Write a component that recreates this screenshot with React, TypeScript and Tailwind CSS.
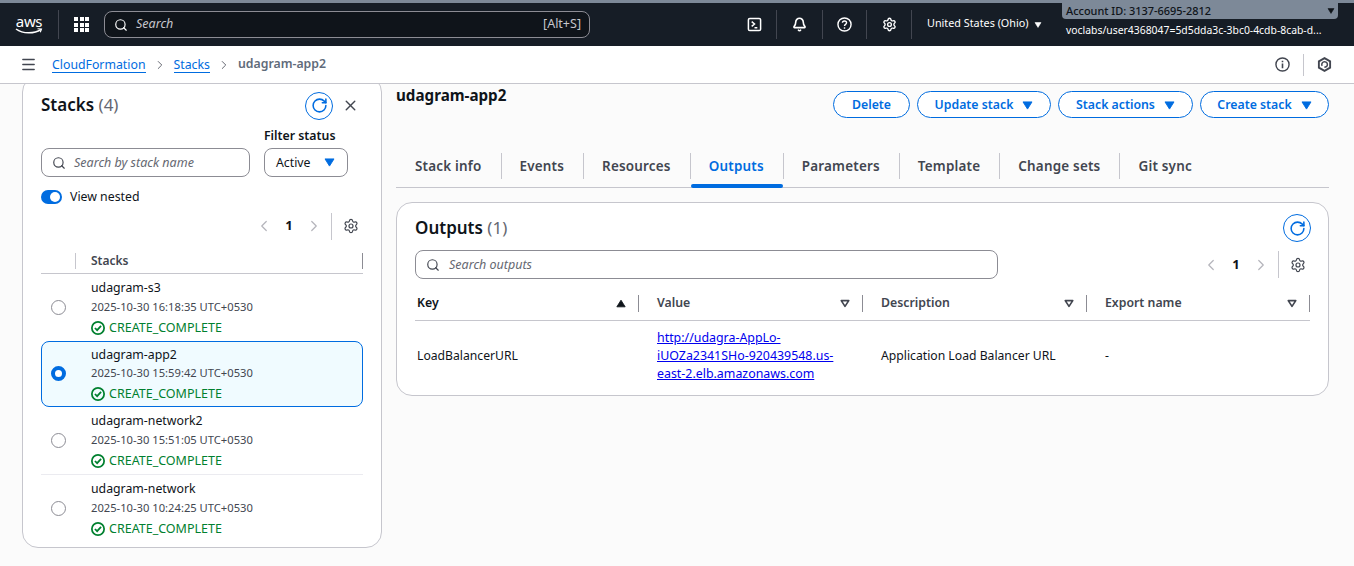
import React from 'react';
import { ChevronLeft, ChevronRight, Search, Settings, X, RotateCw, Bell, Menu } from 'lucide-react';

const Caret = ({ className = '' }: { className?: string }) => (
  <svg viewBox="0 0 12 10" className={className} fill="currentColor">
    <path d="M1 1h10L6 9z" stroke="currentColor" strokeWidth="1" strokeLinejoin="round" />
  </svg>
);

const SortDown = () => (
  <svg viewBox="0 0 12 10" className="w-[10px] h-[9px] text-[#424650]" fill="none">
    <path d="M1.5 1.5h9L6 8.5z" stroke="currentColor" strokeWidth="2" strokeLinejoin="round" />
  </svg>
);

const SortUp = () => (
  <svg viewBox="0 0 12 10" className="w-[10px] h-[9px] text-[#0f141a]" fill="currentColor">
    <path d="M1 9h10L6 1z" stroke="currentColor" strokeWidth="1" strokeLinejoin="round" />
  </svg>
);

const CheckCircle = () => (
  <svg viewBox="0 0 16 16" className="w-[14px] h-[14px] text-[#00802f] shrink-0" fill="none" stroke="currentColor" strokeWidth="2">
    <circle cx="8" cy="8" r="7" />
    <path d="M4.5 8l2.5 2.5L11.5 5.5" />
  </svg>
);

const AwsLogo = () => (
  <div className="flex flex-col items-center w-[28px]">
    <span className="text-[15px] leading-[13px] text-white font-normal tracking-tight">aws</span>
    <svg viewBox="0 0 28 7" className="w-[28px] h-[7px]" fill="none" stroke="white" strokeWidth="1.5">
      <path d="M1 1c7 5 18 5 25 .5" />
      <path d="M22.500 .8l4 .2-1.200 3.200" strokeWidth="1.100" />
    </svg>
  </div>
);

const GridIcon = () => (
  <div className="grid grid-cols-3 gap-[1.5px] w-[15px] h-[15px] shrink-0">
    {Array.from({ length: 9 }).map((_, i) => (
      <span key={i} className="bg-white w-[4px] h-[4px]" />
    ))}
  </div>
);

const CloudShell = () => (
  <svg viewBox="0 0 16 16" className="w-[15px] h-[15px]" fill="none" stroke="white" strokeWidth="1.6">
    <rect x="1.5" y="1.5" width="13" height="13" rx="1.5" />
    <path d="M5 5l3 2.5L5 10M8 11.5h3" />
  </svg>
);

const HelpIcon = () => (
  <svg viewBox="0 0 16 16" className="w-[15px] h-[15px]" fill="none" stroke="white" strokeWidth="1.5">
    <circle cx="8" cy="8" r="7" />
    <path d="M5.8 6.2C5.8 4.9 6.8 4.2 8 4.2s2.2.8 2.2 2c0 1.6-2.2 1.7-2.2 3.4" />
    <path d="M8 11v1.5" />
  </svg>
);

const InfoIcon = () => (
  <svg viewBox="0 0 16 16" className="w-[15px] h-[15px]" fill="none" stroke="#424650" strokeWidth="1.5">
    <circle cx="8" cy="8" r="7" />
    <path d="M8 7v5M8 4v1.6" strokeWidth="1.7" />
  </svg>
);

const HexIcon = () => (
  <svg viewBox="0 0 16 16" className="w-[15px] h-[15px]" fill="none" stroke="#424650" strokeWidth="2">
    <path d="M8 1.2l6 3.4v6.8l-6 3.4-6-3.4V4.600z" />
    <path d="M5.500 9.500A3 3 0 1 1 8 11l3-1" strokeWidth="1.600" />
  </svg>
);

const RefreshButton = () => (
  <button className="w-[28px] h-[28px] rounded-full border border-[#006ce0] bg-white flex items-center justify-center text-[#006ce0]">
    <RotateCw className="w-[17px] h-[17px]" strokeWidth={2.2} />
  </button>
);

const Pager = () => (
  <div className="flex items-center h-[28px]">
    <ChevronLeft className="w-[18px] h-[18px] text-[#b4b4bb]" strokeWidth={1.6} />
    <span className="mx-[12px] text-[13px] font-bold text-[#0f141a] w-[8px] text-center">1</span>
    <ChevronRight className="w-[18px] h-[18px] text-[#b4b4bb]" strokeWidth={1.6} />
    <div className="w-px h-[27px] bg-[#c6c6cd] ml-[8px] mr-[11px]" />
    <Settings className="w-[16px] h-[16px] text-[#424650]" strokeWidth={1.8} />
  </div>
);

const stacks = [
  { name: 'udagram-s3', time: '2025-10-30 16:18:35 UTC+0530' },
  { name: 'udagram-app2', time: '2025-10-30 15:59:42 UTC+0530', selected: true },
  { name: 'udagram-network2', time: '2025-10-30 15:51:05 UTC+0530' },
  { name: 'udagram-network', time: '2025-10-30 10:24:25 UTC+0530' },
];

const StackRow = ({ name, time, selected }: { name: string; time: string; selected?: boolean }) => (
  <div className={`flex items-center rounded-[8px] ${selected ? 'h-[66px] border border-[#006ce0] bg-[#f0fbff]' : 'h-[67px] border border-transparent'}`}>
    <div className={`w-[49px] flex justify-start shrink-0 pl-[9px] ${selected ? '-mt-[1px]' : ''}`}>
      {selected ? (
        <span className="w-[15px] h-[15px] rounded-full border-[4px] border-[#006ce0] bg-white" />
      ) : (
        <span className="w-[15px] h-[15px] rounded-full border border-[#8c8c94] bg-white" />
      )}
    </div>
    <div className={`flex flex-col gap-0 text-[#0f141a] ${selected ? '-mt-[1px]' : ''}`}>
      <span className={`text-[12.3px] h-[20px] ${selected ? 'leading-[24px]' : 'leading-[22px]'}`}>{name}</span>
      <span className="text-[11.2px] leading-[20px] h-[20px] text-[#424650]">{time}</span>
      <span className="flex items-center gap-[4px] text-[12.5px] leading-[20px] text-[#00802f] h-[20px] mt-[1px]">
        <CheckCircle />
        CREATE_COMPLETE
      </span>
    </div>
  </div>
);

const tabs = ['Stack info', 'Events', 'Resources', 'Outputs', 'Parameters', 'Template', 'Change sets', 'Git sync'];

const ActionButton = ({ label, caret, width }: { label: string; caret?: boolean; width: string }) => (
  <button className={`h-[27px] ${width} rounded-full border border-[#006ce0] bg-white text-[#006ce0] text-[12.3px] font-semibold flex items-center justify-center gap-[9px] pt-[1px]`}>
    {label}
    {caret && <Caret className="w-[11px] h-[9px]" />}
  </button>
);

const HeaderCell = ({ label, width, sort }: { label: string; width: string; sort: 'up' | 'down' }) => (
  <div className={`flex items-center ${width} shrink-0 h-[17px]`}>
    <span className={`flex-1 text-[12.3px] font-semibold ${sort === 'up' ? 'text-[#0f141a]' : 'text-[#424650]'}`}>{label}</span>
    {sort === 'up' ? <SortUp /> : <SortDown />}
    <div className="w-px h-[17px] bg-[#8c8c94] ml-[12px]" />
  </div>
);

export default function App() {
  return (
    <div className="w-[1354px] h-[566px] overflow-hidden flex flex-col bg-[#fbfbfb] font-['Noto_Sans',sans-serif]">
      {/* top nav */}
      <div className="h-[3px] bg-[#7d8998] shrink-0" />
      <div className="relative h-[43px] bg-[#161d26] shrink-0 flex items-center text-white">
        <div className="ml-[15px]"><AwsLogo /></div>
        <div className="w-px h-[29px] bg-[#424650] ml-[15px] mr-[15px]" />
        <GridIcon />
        <div className="ml-[15px] w-[486px] h-[27px] rounded-[8px] border border-[#8c8c94] bg-[#0f141a] flex items-center pl-[9px] pr-[8px] text-[12.5px] text-[#c6c6cd]">
          <Search className="w-[14px] h-[14px] text-white mr-[8px]" strokeWidth={2} />
          <span className="italic flex-1">Search</span>
          <span>[Alt+S]</span>
        </div>
        <div className="ml-[157px] flex items-center">
          <CloudShell />
          <div className="w-px h-[29px] bg-[#424650] ml-[14px] mr-[15px]" />
          <Bell className="w-[15px] h-[15px]" strokeWidth={2.6} />
          <div className="w-px h-[29px] bg-[#424650] ml-[15px] mr-[14px]" />
          <HelpIcon />
          <div className="w-px h-[29px] bg-[#424650] ml-[14px] mr-[15px]" />
          <Settings className="w-[15px] h-[15px]" strokeWidth={2.2} />
          <div className="w-px h-[29px] bg-[#424650] ml-[14px] mr-[15px]" />
          <span className="text-[10.8px] whitespace-nowrap -mt-[3px]">United States (Ohio)</span>
          <Caret className="w-[8px] h-[6px] ml-[5px]" />
        </div>
        <div className="absolute left-[1062px] top-0 w-[276px] h-[16px] bg-[#7d8998] rounded-b-[4px] flex items-center pl-[4px] pr-[3px] text-[#0f141a] text-[10.95px] font-medium">
          <span className="flex-1">Account ID: 3137-6695-2812</span>
          <Caret className="w-[8px] h-[6px]" />
        </div>
        <span className="absolute left-[1066px] top-[20px] text-[10.4px] whitespace-nowrap">voclabs/user4368047=5d5dda3c-3bc0-4cdb-8cab-d...</span>
      </div>

      {/* breadcrumb bar */}
      <div className="h-[38px] bg-white border-b border-[#c6c6cd] shrink-0 flex items-center pl-[20px] pr-[22px] text-[12.3px]">
        <Menu className="w-[17px] h-[17px] text-[#424650] mr-[15px]" strokeWidth={2} />
        <span className="text-[#006ce0] border-b border-[#006ce0] leading-[15px]">CloudFormation</span>
        <ChevronRight className="w-[14px] h-[14px] text-[#656871] mx-[7px]" strokeWidth={1.7} />
        <span className="text-[#006ce0] border-b border-[#006ce0] leading-[15px]">Stacks</span>
        <ChevronRight className="w-[14px] h-[14px] text-[#656871] mx-[7px]" strokeWidth={1.7} />
        <span className="text-[#5f6b7a] font-semibold">udagram-app2</span>
        <div className="ml-auto flex items-center">
          <InfoIcon />
          <div className="w-px h-[22px] bg-[#c6c6cd] mx-[13px]" />
          <HexIcon />
        </div>
      </div>

      {/* body */}
      <div className="flex-1 overflow-hidden flex pl-[22px] pr-[25px] gap-[14px]">
        {/* stacks panel */}
        <div className="w-[360px] h-[472px] -mt-[8px] shrink-0 rounded-[16px] border border-[#c6c6cd] bg-white pt-[8px] px-[18px]">
          <div className="flex items-center h-[40px] pt-[1px]">
            <h2 className="text-[17px] font-semibold text-[#0f141a] -mt-[2px]">
              Stacks <span className="font-normal text-[#656871]">(4)</span>
            </h2>
            <div className="ml-auto mr-[4px] flex items-center gap-[9px]">
              <RefreshButton />
              <X className="w-[17px] h-[17px] text-[#424650]" strokeWidth={2} />
            </div>
          </div>
          <div className="flex gap-[14px] mt-[2px]">
            <div className="w-[209px] pt-[21px]">
              <div className="h-[29px] rounded-[8px] border border-[#8c8c94] bg-white flex items-center pl-[10px] pt-[2px] text-[12.5px] text-[#656871] italic">
                <Search className="w-[14px] h-[14px] text-[#424650] mr-[8px] -mt-[2px]" strokeWidth={2} />
                Search by stack name
              </div>
            </div>
            <div className="w-[84px]">
              <div className="text-[12.3px] font-semibold text-[#0f141a] leading-[17px] h-[21px]">Filter status</div>
              <div className="h-[29px] rounded-[8px] border border-[#8c8c94] bg-white flex items-center justify-between pl-[11px] pr-[12px] pt-[2px] text-[12.3px] text-[#0f141a]">
                Active
                <Caret className="w-[11px] h-[9px] text-[#006ce0] -mt-[2px]" />
              </div>
            </div>
          </div>
          <div className="flex items-center gap-[8px] mt-[10px] h-[20px]">
            <span className="w-[21px] h-[14px] rounded-full bg-[#006ce0] flex items-center justify-end pr-[2px]">
              <span className="w-[10px] h-[10px] rounded-full bg-white" />
            </span>
            <span className="text-[12.3px] text-[#0f141a]">View nested</span>
          </div>
          <div className="flex justify-end mt-[5px] pr-[4px]">
            <Pager />
          </div>
          <div className="flex items-center h-[31px] mt-[3px] border-b border-[#c6c6cd] pt-[6px]">
            <div className="w-[35px] flex justify-end"><div className="w-px h-[16px] bg-[#c6c6cd]" /></div>
            <span className="ml-[15px] text-[12px] font-semibold text-[#424650]">Stacks</span>
            <div className="ml-auto w-px h-[16px] bg-[#8c8c94]" />
          </div>
          <StackRow {...stacks[0]} />
          <StackRow {...stacks[1]} />
          <StackRow {...stacks[2]} />
          <div className="h-px bg-[#ebebf0]" />
          <StackRow {...stacks[3]} />
        </div>

        {/* details */}
        <div className="flex-1 min-w-0">
          <div className="flex items-start h-[69px]">
            <h1 className="text-[15.2px] font-bold text-[#0f141a] leading-[24px] -mt-[1px]">udagram-app2</h1>
            <div className="ml-auto flex gap-[7px] mt-[7px]">
              <ActionButton label="Delete" width="w-[77px]" />
              <ActionButton label="Update stack" caret width="w-[134px]" />
              <ActionButton label="Stack actions" caret width="w-[135px]" />
              <ActionButton label="Create stack" caret width="w-[129px]" />
            </div>
          </div>

          <div className="flex items-center h-[35px] border-b border-[#c6c6cd] relative">
            {tabs.map((tab, i) => (
              <div key={tab} className={`relative flex items-center h-[35px] pb-[7px] px-[19px] ${i > 0 ? 'before:absolute before:left-0 before:top-0 before:h-[26px] before:w-px before:bg-[#c6c6cd]' : ''}`}>
                <span className={`text-[13.45px] font-semibold tracking-[0.2px] ${tab === 'Outputs' ? 'text-[#006ce0]' : 'text-[#424650]'}`}>{tab}</span>
                {tab === 'Outputs' && <div className="absolute left-[1px] right-0 bottom-0 h-[3.5px] rounded-[2px] bg-[#006ce0]" />}
              </div>
            ))}
          </div>

          <div className="mt-[14px] h-[194px] rounded-[16px] border border-[#c6c6cd] bg-white px-[18px] pt-[10px]">
            <div className="flex items-center h-[30px]">
              <h2 className="text-[17px] font-semibold text-[#0f141a]">
                Outputs <span className="font-normal text-[#656871]">(1)</span>
              </h2>
              <div className="ml-auto -mr-[1px]"><RefreshButton /></div>
            </div>
            <div className="flex items-center mt-[7px] h-[29px]">
              <div className="w-[583px] h-[29px] rounded-[8px] border border-[#8c8c94] bg-white flex items-center pl-[10px] pt-[2px] text-[12.5px] text-[#656871] italic">
                <Search className="w-[14px] h-[14px] text-[#424650] mr-[9px] -mt-[2px]" strokeWidth={2} />
                Search outputs
              </div>
              <div className="ml-auto mr-[4px]"><Pager /></div>
            </div>
            <div className="flex items-center h-[40px] border-b border-[#c6c6cd] pl-[2px] w-[895px] mt-[2px] pt-[6px]">
              <HeaderCell label="Key" width="w-[222px]" sort="up" />
              <div className="w-[18px]" />
              <HeaderCell label="Value" width="w-[206px]" sort="down" />
              <div className="w-[18px]" />
              <HeaderCell label="Description" width="w-[206px]" sort="down" />
              <div className="w-[18px]" />
              <HeaderCell label="Export name" width="w-[205px]" sort="down" />
            </div>
            <div className="flex items-center h-[70px] pl-[2px] text-[12.2px] text-[#0f141a]">
              <span className="w-[240px] shrink-0">LoadBalancerURL</span>
              <a href="#" className="w-[224px] shrink-0 pr-[30px] text-[12.4px] text-[#0000ee] underline leading-[18px] break-words">
                http://udagra-AppLo-<br />iUOZa2341SHo-920439548.us-<br />east-2.elb.amazonaws.com
              </a>
              <span className="w-[224px] shrink-0">Application Load Balancer URL</span>
              <span>-</span>
            </div>
          </div>
        </div>
      </div>
    </div>
  );
}
